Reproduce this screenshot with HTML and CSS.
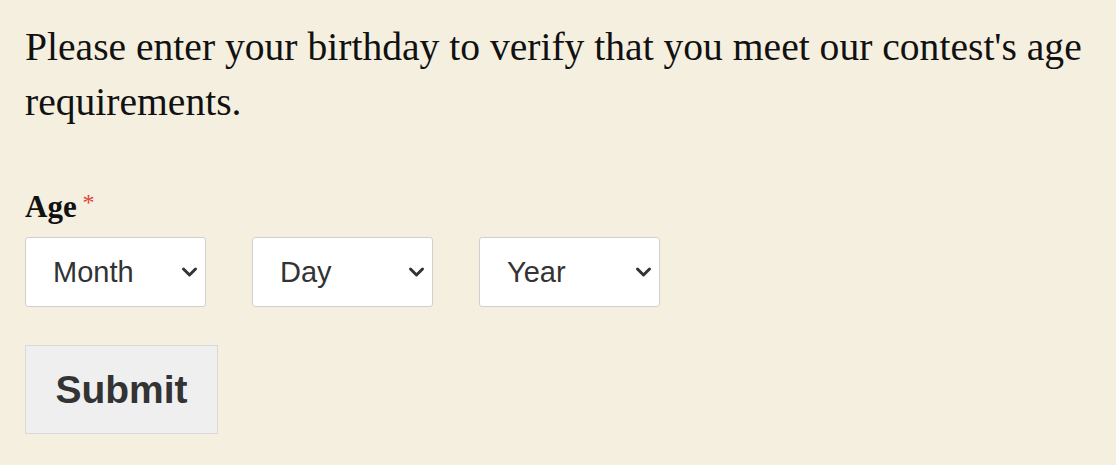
FILE: index.html
```html
<!DOCTYPE html>
<html lang="en">
<head>
<meta charset="utf-8">
<title>Age verification</title>
<link rel="stylesheet" href="styles.css">
</head>
<body>
<form class="form">
  <p class="intro">Please enter your birthday to verify that you meet our contest's age requirements.</p>
  <div class="field">
    <label class="label">Age <span class="req">*</span></label>
    <div class="selects">
      <div class="sel">
        <select><option>Month</option></select>
        <svg class="chev" viewBox="0 0 17 12" width="17" height="12"><path d="M2.5 3 L8.5 9 L14.5 3" fill="none" stroke="#333" stroke-width="3" stroke-linecap="round" stroke-linejoin="round"/></svg>
      </div>
      <div class="sel">
        <select><option>Day</option></select>
        <svg class="chev" viewBox="0 0 17 12" width="17" height="12"><path d="M2.5 3 L8.5 9 L14.5 3" fill="none" stroke="#333" stroke-width="3" stroke-linecap="round" stroke-linejoin="round"/></svg>
      </div>
      <div class="sel">
        <select><option>Year</option></select>
        <svg class="chev" viewBox="0 0 17 12" width="17" height="12"><path d="M2.5 3 L8.5 9 L14.5 3" fill="none" stroke="#333" stroke-width="3" stroke-linecap="round" stroke-linejoin="round"/></svg>
      </div>
    </div>
  </div>
  <button type="button" class="submit">Submit</button>
</form>
</body>
</html>
```
FILE: styles.css
```css
html, body {
  margin: 0;
  background: #f5efdf;
}
body {
  padding: 20px 0 0 25px;
  font-family: "Liberation Serif", "DejaVu Serif", serif;
  color: #111;
}
.intro {
  margin: 0;
  font-size: 39.6px;
  line-height: 55px;
}
.field {
  margin-top: 62px;
}
.label {
  display: block;
  font-weight: bold;
  font-size: 31px;
  line-height: 30px;
}
.req {
  color: #e43c3c;
  font-weight: normal;
  font-size: 24px;
  position: relative;
  top: -7px;
  margin-left: -2px;
}
.selects {
  display: flex;
  gap: 46px;
  margin-top: 13px;
}
.sel {
  position: relative;
  width: 181px;
  height: 70px;
}
.sel select {
  appearance: none;
  -webkit-appearance: none;
  width: 100%;
  height: 100%;
  box-sizing: border-box;
  background: #fff;
  border: 1.5px solid #cfcfcf;
  border-radius: 3px;
  padding: 0 0 0 27px;
  font-family: "Liberation Sans", Arial, sans-serif;
  font-size: 29px;
  color: #333;
  margin: 0;
}
.chev {
  position: absolute;
  right: 8px;
  top: 29px;
  pointer-events: none;
}
.submit {
  display: block;
  margin-top: 38px;
  width: 193px;
  height: 89px;
  box-sizing: border-box;
  background: #efefef;
  border: 1.5px solid #d8d8d8;
  border-radius: 0;
  font-family: "Liberation Sans", Arial, sans-serif;
  font-weight: bold;
  font-size: 39px;
  color: #333;
  padding: 0;
}
```
